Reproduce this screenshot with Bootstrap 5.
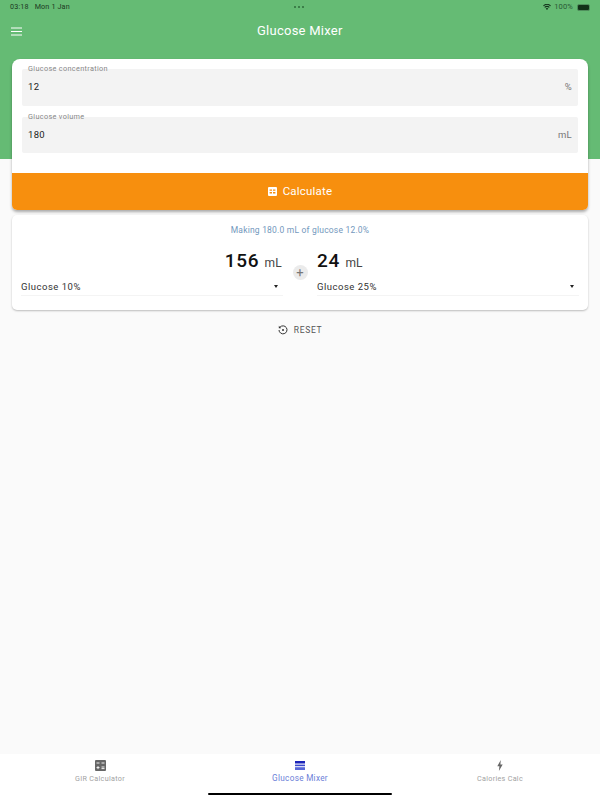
<!DOCTYPE html>
<html lang="en">
<head>
    <meta charset="UTF-8">
    <meta name="viewport" content="width=device-width, initial-scale=1.0">
    <title>Glucose Mixer</title>
    <link href="https://cdn.jsdelivr.net/npm/bootstrap@5.3.0/dist/css/bootstrap.min.css" rel="stylesheet">
    <style>
        html, body { height: 800px; overflow: hidden; }
        body { background: #fafafa; font-family: Roboto, "Liberation Sans", sans-serif; color: #111; }
        .app-shell { height: 800px; }

        /* header */
        .green-head { background: #65bb74; height: 159px; padding: 0 10px; color: #fff; }
        .status-row { height: 13px; padding-top: 1px; font-size: 7.2px; color: #1c3a22; letter-spacing: .15px; line-height: 10px; }
        .clock { width: 190px; gap: 6px; }
        .status-dots { width: 12px; gap: 2px; }
        .status-dots i { width: 2px; height: 2px; border-radius: 50%; background: #2f6b3b; display: block; }
        .status-right { width: 190px; gap: 3px; font-size: 7.5px; color: #2a5a35; }
        .batt { width: 13px; height: 7px; border-radius: 2px; background: #123018; border: 1px solid #4f8f5c; margin-left: 1px; }
        .title-row { height: 36px; }
        .burger { width: 11px; height: 9px; display: block; margin-left: 1px; }
        .page-title { font-size: 13px; letter-spacing: .25px; margin-left: 235px; }

        /* form card */
        .main-area { margin-top: -100px; padding: 0 12px; }
        .form-box { background: #fff; border-radius: 8px 8px 5px 5px; box-shadow: 0 2px 3px rgba(0,0,0,.32); overflow: hidden; }
        .field-wrap { padding: 10px 10px 20px; }
        .mix-field { background: #f3f3f3; height: 36.5px; border-radius: 2px; padding: 0 6px; font-size: 9.5px; letter-spacing: .3px; margin-bottom: 11px; position: relative; color: #222; }
        .mix-field:last-child { margin-bottom: 0; }
        .mix-label { position: absolute; left: 6px; top: -4px; font-size: 7.3px; line-height: 8px; color: #888; letter-spacing: .33px; }
        .mix-unit { color: #777; font-size: 9.5px; }
        .calc-btn { background: #f78f0e; height: 37px; color: #fff; font-size: 11.5px; letter-spacing: .2px; gap: 6px; width: 100%; border: 0; }

        /* result card */
        .result-box { background: #fff; border-radius: 5px; margin-top: 5px; height: 95px; box-shadow: 0 1px 2px rgba(0,0,0,.25); padding: 0 9px; }
        .making { font-size: 8.5px; color: #7398bd; letter-spacing: .2px; text-align: center; padding-top: 10px; line-height: 10px; height: 26px; }
        .mix-col { width: 262px; }
        .amount { text-align: right; line-height: 24px; height: 24px; margin-top: 8px; font-size: 12px; color: #444; letter-spacing: .2px; padding-right: 1px; }
        .amount b { font-size: 19px; font-weight: 500; color: #111; letter-spacing: .8px; margin-right: 2px; }
        .amount-right { text-align: left; }
        .pick { font-size: 9.5px; letter-spacing: .5px; height: 19px; margin-top: 4px; border-bottom: 1px solid #f4f4f4; color: #333; padding-right: 5px; line-height: 14px; padding-top: 1px; }
        .caret-down { width: 0; height: 0; border-left: 2.5px solid transparent; border-right: 2.5px solid transparent; border-top: 3px solid #222; }
        .plus-wrap { width: 34px; padding-top: 24px; }
        .plus-dot { width: 15px; height: 15px; border-radius: 50%; background: #ebebeb; color: #777; font-size: 13px; line-height: 15px; text-align: center; margin: 0 auto; }
        .reset-row { margin-top: 13px; font-size: 8.5px; letter-spacing: .7px; color: #555; gap: 6px; height: 14px; }

        /* bottom tabs */
        .tab-bar { background: #fff; height: 46px; position: relative; }
        .tab-item { flex: 1 1 0; padding-top: 6px; font-size: 7.2px; letter-spacing: .3px; color: #a2a2a2; text-align: center; line-height: 9px; }
        .tab-item svg { display: block; margin: 0 auto 3px; }
        .tab-on { color: #6b80d8; font-size: 8.2px; }
        .home-bar { position: absolute; left: 208px; bottom: 5px; width: 184px; height: 2.5px; background: #000; border-radius: 2px; }
    </style>
</head>
<body>

<div class="app-shell d-flex flex-column">
    <!-- Green header -->
    <div class="green-head">
        <div class="status-row d-flex justify-content-between align-items-center">
            <div class="clock d-flex"><span>03:18</span><span>Mon 1 Jan</span></div>
            <div class="status-dots d-flex"><i></i><i></i><i></i></div>
            <div class="status-right d-flex justify-content-end align-items-center">
                <svg width="8" height="6" viewBox="0 0 18 14"><path d="M9 14 6 10.6a4.5 4.5 0 0 1 6 0zM4.4 8.9 2.6 6.9a9.6 9.6 0 0 1 12.8 0l-1.8 2a7 7 0 0 0-9.2 0zM1.2 5.3 0 3.5a13.6 13.6 0 0 1 18 0l-1.2 1.8a11.6 11.6 0 0 0-15.6 0z" fill="#12301a"/></svg>
                <span>100%</span>
                <div class="batt"></div>
            </div>
        </div>
        <div class="title-row d-flex align-items-center">
            <svg class="burger" viewBox="0 0 11 9"><path d="M0 1h11M0 4.5h11M0 8h11" stroke="#fff" stroke-width="1"/></svg>
            <div class="page-title">Glucose Mixer</div>
        </div>
    </div>

    <div class="main-area flex-grow-1">
        <!-- Inputs -->
        <div class="form-box">
            <div class="field-wrap">
                <div class="mix-field d-flex justify-content-between align-items-center">
                    <span class="mix-label">Glucose concentration</span>
                    <span>12</span>
                    <span class="mix-unit">%</span>
                </div>
                <div class="mix-field d-flex justify-content-between align-items-center">
                    <span class="mix-label">Glucose volume</span>
                    <span>180</span>
                    <span class="mix-unit">mL</span>
                </div>
            </div>
            <button class="calc-btn d-flex justify-content-center align-items-center">
                <svg width="9" height="9" viewBox="0 0 9 9"><path fill-rule="evenodd" fill="#fff" d="M1 0h7a1 1 0 0 1 1 1v7a1 1 0 0 1-1 1H1a1 1 0 0 1-1-1V1a1 1 0 0 1 1-1zM1.6 2.4v1.4h2.4V2.4zM5 2.4v1.4h2.4V2.4zM1.6 5v1.6h2.4V5zM5 5v1.6h2.4V5z"/></svg>
                <span>Calculate</span>
            </button>
        </div>

        <!-- Result -->
        <div class="result-box">
            <div class="making">Making 180.0 mL of glucose 12.0%</div>
            <div class="d-flex">
                <div class="mix-col">
                    <div class="amount"><b>156</b> mL</div>
                    <div class="pick d-flex justify-content-between align-items-center"><span>Glucose 10%</span><span class="caret-down"></span></div>
                </div>
                <div class="plus-wrap"><div class="plus-dot">+</div></div>
                <div class="mix-col">
                    <div class="amount amount-right"><b>24</b> mL</div>
                    <div class="pick d-flex justify-content-between align-items-center"><span>Glucose 25%</span><span class="caret-down"></span></div>
                </div>
            </div>
        </div>

        <div class="reset-row d-flex justify-content-center align-items-center">
            <svg width="10" height="10" viewBox="0 0 10 10" fill="none"><path d="M2 2.2A4 4 0 1 1 1 5" stroke="#333" stroke-width="1"/><path d="M.8 .8v2.4h2.4z" fill="#333"/><circle cx="5" cy="5" r="1" fill="#333"/></svg>
            <span>RESET</span>
        </div>
    </div>

    <!-- Bottom tabs -->
    <div class="tab-bar d-flex">
        <div class="tab-item">
            <svg width="11" height="11" viewBox="0 0 11 11"><rect width="11" height="11" rx="1" fill="#666"/><path d="M1.5 3h3M6.5 3h3M6.5 7h3M6.5 8.6h3M1.5 7.6h3M3 6.1v3" stroke="#fff" stroke-width=".9"/></svg>
            GIR Calculator
        </div>
        <div class="tab-item tab-on">
            <svg width="10" height="11" viewBox="0 0 10 11"><rect y="1" width="10" height="2.5" fill="#1a23b8"/><rect y="4.6" width="10" height="1.6" fill="#3a48cc"/><rect y="7.2" width="10" height="2.8" fill="#5766d8"/></svg>
            Glucose Mixer
        </div>
        <div class="tab-item">
            <svg width="6" height="11" viewBox="0 0 6 11"><path d="M3.8 0 .3 6.2h2.1L1.9 11l3.8-6.6H3.4z" fill="#666"/></svg>
            Calories Calc
        </div>
        <div class="home-bar"></div>
    </div>
</div>

<script src="https://cdn.jsdelivr.net/npm/bootstrap@5.3.0/dist/js/bootstrap.bundle.min.js"></script>
</body>
</html>
